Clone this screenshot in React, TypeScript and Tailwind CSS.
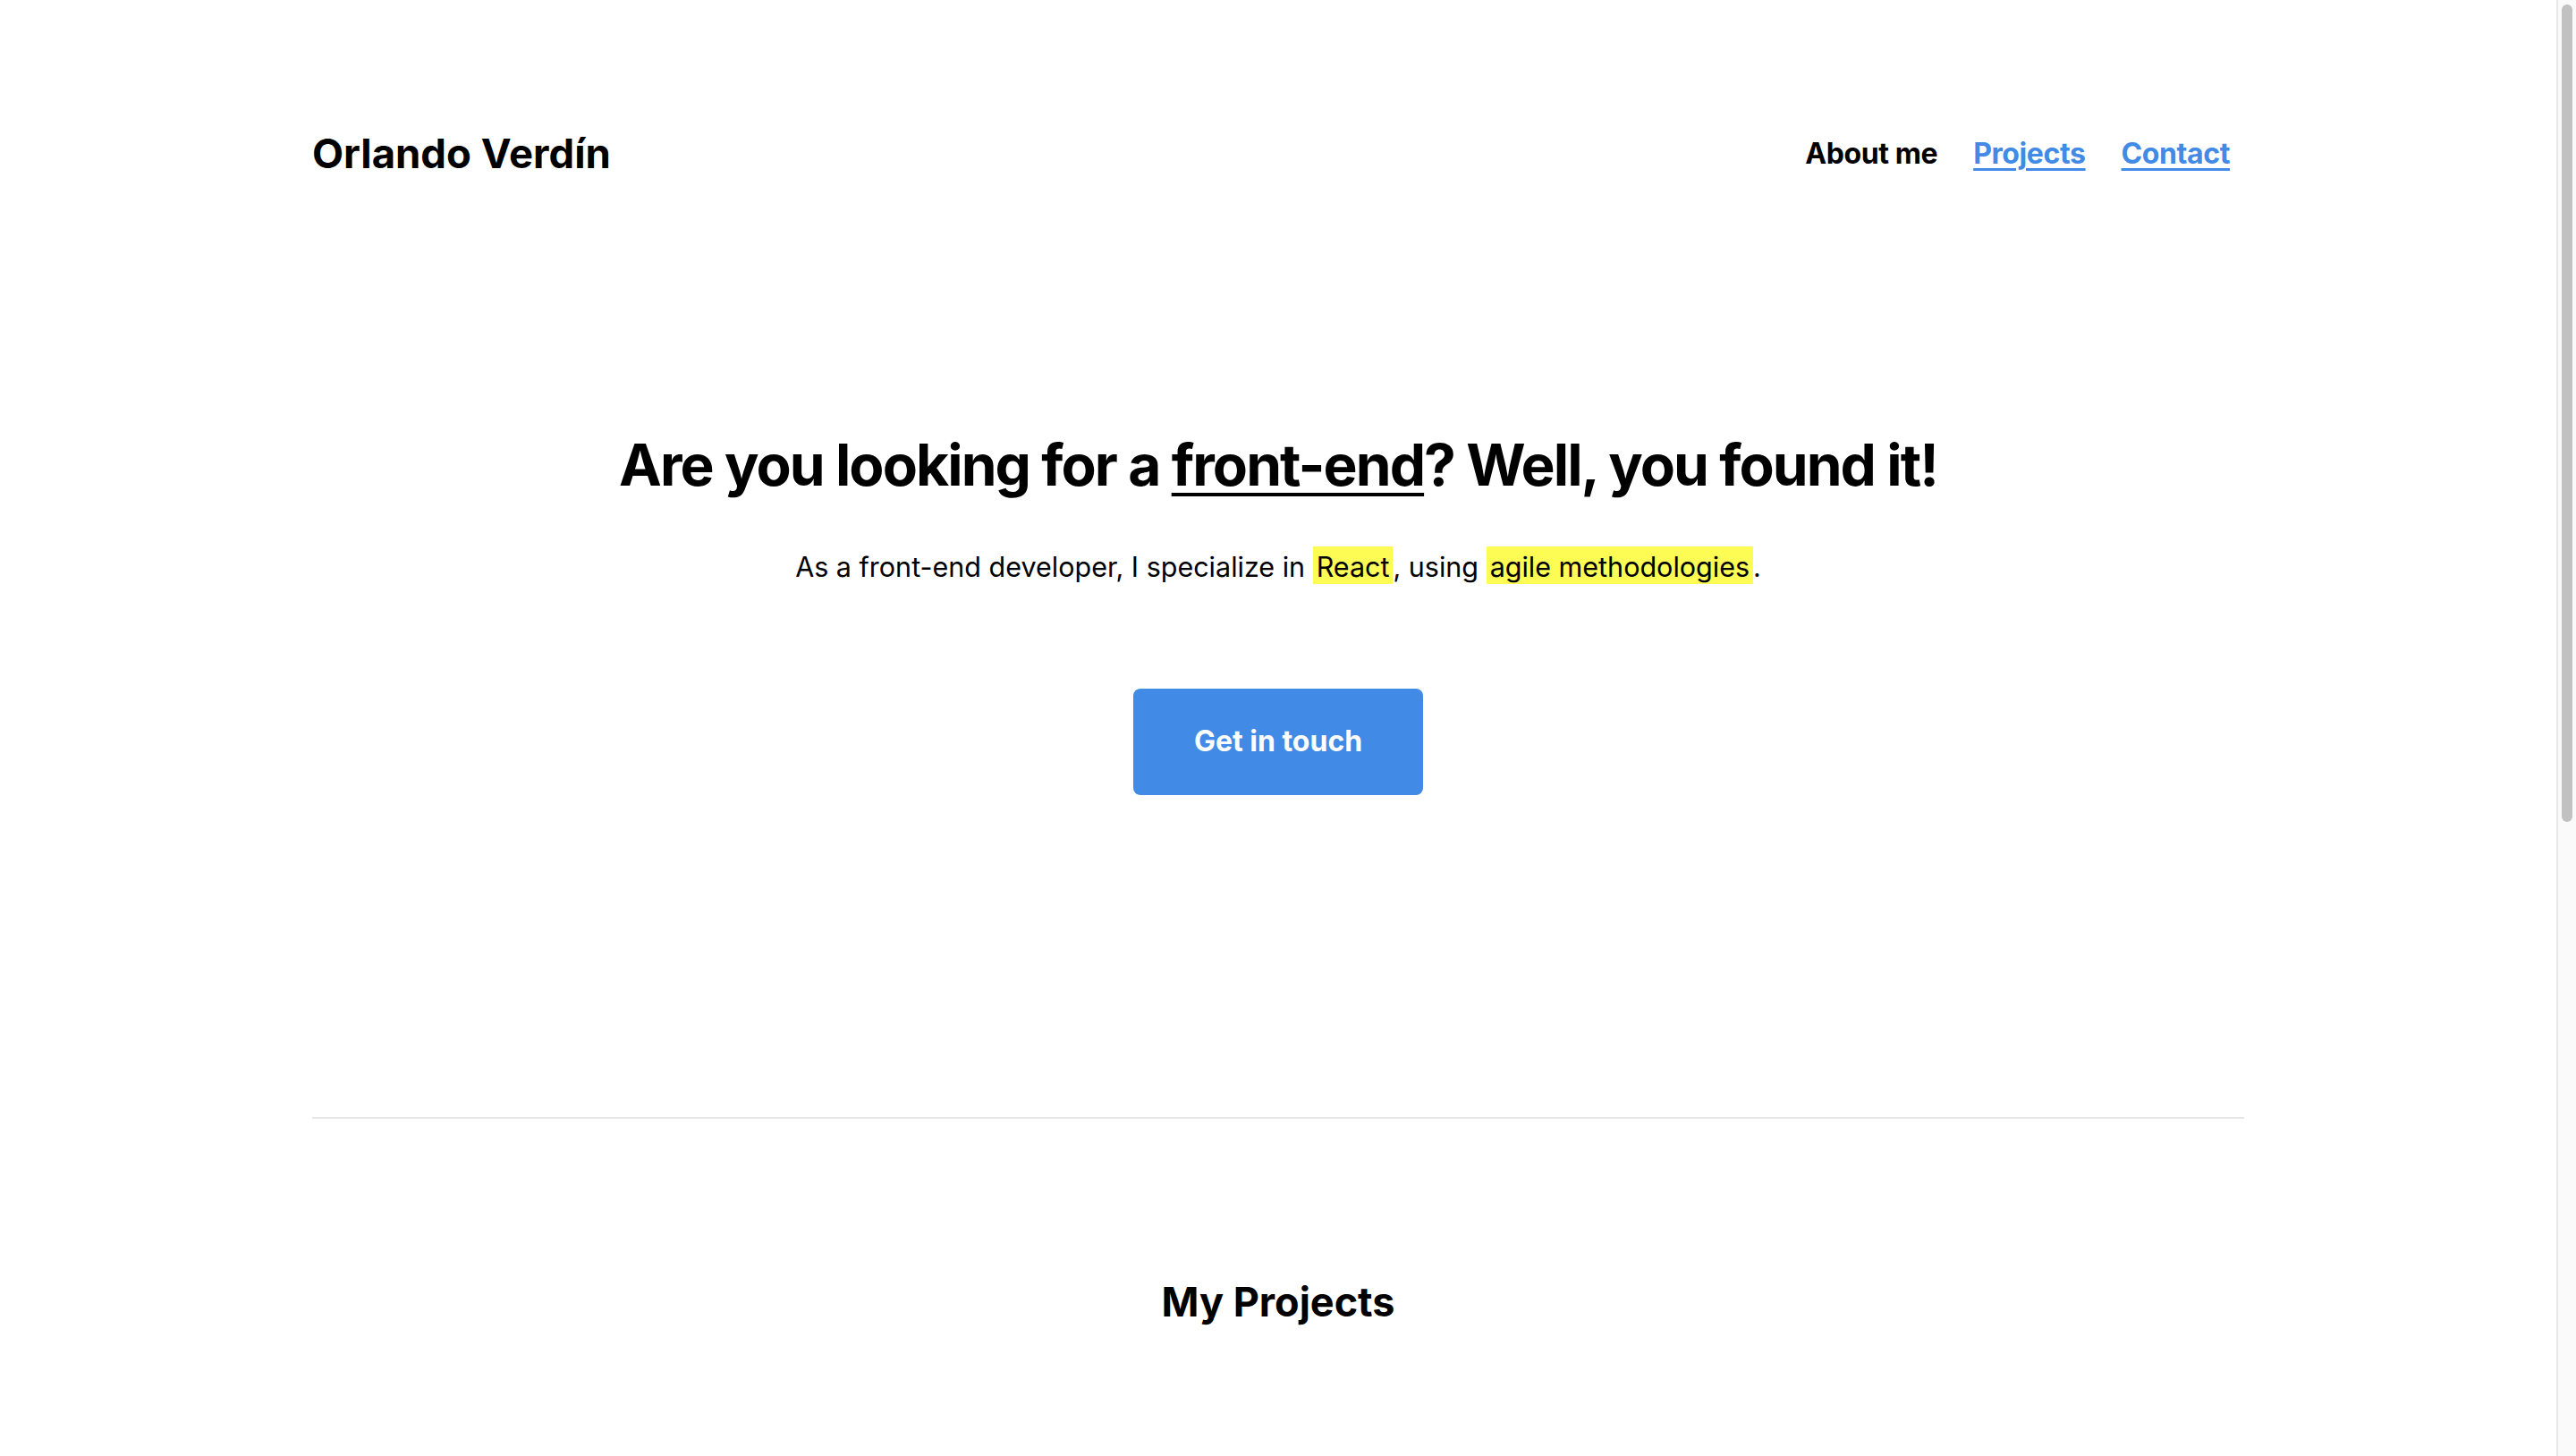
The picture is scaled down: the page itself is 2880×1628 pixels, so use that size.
export default function App() {
  const projects = ["Project one", "Project two", "Project three"]

  return (
    <div className="min-h-screen bg-white text-black font-['Inter','Noto_Sans',sans-serif] pr-[22px]">
      <div className="max-w-[2160px] mx-auto">
        {/* header */}
        <header className="pt-[122px] h-[222px] flex items-center justify-between">
          <h1 className="text-[45.5px] leading-none font-bold">Orlando Verdín</h1>
          <nav className="flex items-center gap-[40px] pr-[16px] text-[32px] leading-none font-bold tracking-[-0.4px]">
            <a className="text-black">About me</a>
            <a href="#projects" className="text-[#418ae6] underline decoration-[3px] underline-offset-[5px]">
              Projects
            </a>
            <a href="#contact" className="text-[#418ae6] underline decoration-[3px] underline-offset-[5px]">
              Contact
            </a>
          </nav>
        </header>

        {/* hero */}
        <section className="pt-[266px] pb-[360px] flex flex-col items-center text-center">
          <h2 className="text-[64px] leading-none font-bold tracking-[-0.03em]">
            Are you looking for a <span className="underline decoration-[4px] underline-offset-[8px]">front-end</span>? Well, you found it!
          </h2>
          <p className="mt-[67px] text-[30.5px] leading-none">
            As a front-end developer, I specialize in{" "}
            <span className="bg-[#fcfc55] px-[4px] pt-[4px] pb-[1px]">React</span>, using{" "}
            <span className="bg-[#fcfc55] px-[4px] pt-[4px] pb-[1px]">agile methodologies</span>.
          </p>
          <button className="mt-[120px] w-[324px] h-[119px] rounded-[8px] bg-[#418ae6] text-white text-[32px] font-bold flex items-center justify-center">
            Get in touch
          </button>
        </section>

        <hr className="border-0 h-[2px] bg-[#e8e8e8]" />

        {/* projects */}
        <section id="projects" className="pt-[182px] pb-[400px] flex flex-col items-center">
          <h2 className="text-[45px] leading-none font-bold">My Projects</h2>
          <div className="mt-[120px] grid grid-cols-3 gap-[48px] w-full px-[40px]">
            {projects.map((p) => (
              <div key={p} className="h-[600px] rounded-[8px] bg-white" />
            ))}
          </div>
        </section>
      </div>

      {/* page scrollbar as seen in the screenshot */}
      <div className="fixed top-0 right-0 h-screen w-[22px] bg-[#fafafa] border-l-2 border-[#e8e8e8] pt-[5px] pl-[4px]">
        <div className="h-[914px] w-[12px] rounded-full bg-[#c1c1c1]" />
      </div>
    </div>
  )
}
